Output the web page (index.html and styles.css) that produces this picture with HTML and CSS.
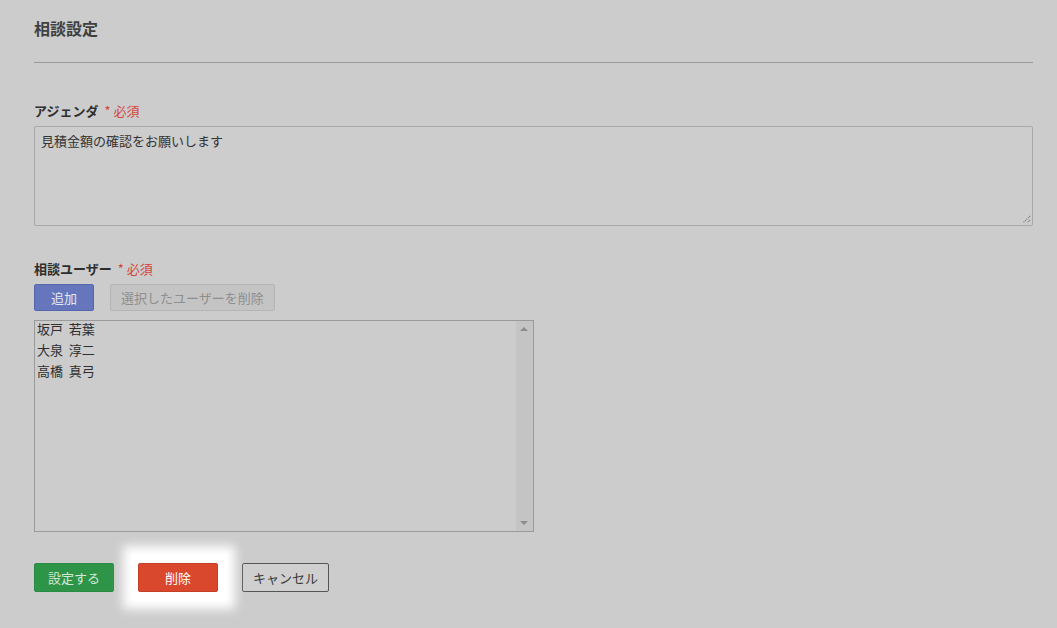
FILE: index.html
```html
<!DOCTYPE html>
<html lang="ja">
<head>
<meta charset="utf-8">
<link rel="stylesheet" href="styles.css">
</head>
<body>
<div class="page">
  <h1 class="title">相談設定</h1>
  <hr class="rule">

  <div class="field agenda">
    <div class="label">アジェンダ<span class="req">* 必須</span></div>
    <div class="textarea">見積金額の確認をお願いします<span class="grip"><svg width="10" height="10" viewBox="0 0 10 10"><path d="M9 2 L2 9 M9 6 L6 9" stroke="#777" stroke-width="1.2" stroke-dasharray="1 1"/></svg></span></div>
  </div>

  <div class="field users">
    <div class="label">相談ユーザー<span class="req">* 必須</span></div>
    <div class="toolbar">
      <button class="btn btn-blue">追加</button>
      <button class="btn btn-disabled">選択したユーザーを削除</button>
    </div>
    <div class="listbox">
      <div class="items">
        <div class="item">坂戸&nbsp;&nbsp;若葉</div>
        <div class="item">大泉&nbsp;&nbsp;淳二</div>
        <div class="item">高橋&nbsp;&nbsp;真弓</div>
      </div>
      <div class="scrollbar">
        <span class="arrow up"></span>
        <span class="arrow down"></span>
      </div>
    </div>
  </div>

  <div class="actions">
    <button class="btn btn-green">設定する</button>
    <div class="spot"><button class="btn btn-red">削除</button></div>
    <button class="btn btn-outline">キャンセル</button>
  </div>
</div>
</body>
</html>
```

FILE: styles.css
```css
* { box-sizing: border-box; }
html, body {
  margin: 0;
  padding: 0;
  background: #cccccc;
  font-family: "Noto Sans CJK JP", "Noto Sans", sans-serif;
  color: #333;
}
.page {
  padding: 14px 24px 40px 34px;
  width: 1057px;
}
.title {
  margin: 0;
  font-size: 16px;
  font-weight: bold;
  color: #404040;
  line-height: 28px;
}
.rule {
  margin: 20px 0 0 0;
  border: 0;
  border-top: 1px solid #9a9a9a;
  height: 0;
}
.field { display: flex; flex-direction: column; }
.agenda { margin-top: 38px; }
.label {
  font-size: 13px;
  font-weight: bold;
  color: #2e2e2e;
  line-height: 20px;
}
.req {
  color: #d2463e;
  font-weight: normal;
  margin-left: 6px;
}
.textarea {
  position: relative;
  margin-top: 5px;
  height: 100px;
  border: 1px solid #a8a8a8;
  border-radius: 2px;
  background: #cdcdcd;
  padding: 4px 6px;
  font-size: 13px;
  line-height: 20px;
  color: #333;
}
.grip {
  position: absolute;
  right: 1px;
  bottom: 1px;
  width: 10px;
  height: 10px;
  display: flex;
}
.users { margin-top: 33px; }
.toolbar {
  display: flex;
  gap: 16px;
  margin-top: 5px;
}
.btn {
  font-family: inherit;
  font-size: 13px;
  border-radius: 2px;
  padding: 0 10px;
  cursor: pointer;
  line-height: 1;
}
.toolbar .btn { height: 27px; }
.btn-blue {
  width: 60px;
  background: #6576bc;
  border: 1px solid #5566ad;
  color: #e6e8f2;
}
.btn-disabled {
  background: #c4c4c4;
  border: 1px solid #b5b5b5;
  color: #8e8e8e;
}
.listbox {
  margin-top: 9px;
  width: 500px;
  height: 212px;
  border: 1px solid #9a9a9a;
  display: flex;
  background: #cccccc;
}
.items {
  flex: 1;
  padding: 0 2px;
  margin-top: -3px;
}
.item {
  font-size: 13px;
  line-height: 21px;
  color: #2e2e2e;
}
.scrollbar {
  width: 17px;
  background: #c4c4c4;
  position: relative;
}
.arrow {
  position: absolute;
  left: 4px;
  width: 0;
  height: 0;
  border-left: 4px solid transparent;
  border-right: 4px solid transparent;
}
.arrow.up {
  top: 6px;
  border-bottom: 4px solid #8c8c8c;
}
.arrow.down {
  bottom: 6px;
  border-top: 4px solid #8c8c8c;
}
.actions {
  display: flex;
  align-items: center;
  gap: 24px;
  margin-top: 31px;
}
.actions .btn { height: 29px; }
.btn-green {
  width: 80px;
  background: #2e9448;
  border: 1px solid #2b8a43;
  color: #d4e8d9;
}
.spot {
  position: relative;
  display: flex;
}
.spot::before {
  content: "";
  position: absolute;
  top: -9px;
  bottom: -9px;
  left: -7px;
  right: -9px;
  background: #ffffff;
  box-shadow: 0 0 10px 8px #ffffff;
}
.btn-red {
  position: relative;
  width: 80px;
  background: #d9482c;
  border: 1px solid #c33f27;
  color: #ffffff;
}
.btn-outline {
  width: 87px;
  background: #cfcfcf;
  border: 1px solid #555;
  color: #3a3a3a;
}
```
